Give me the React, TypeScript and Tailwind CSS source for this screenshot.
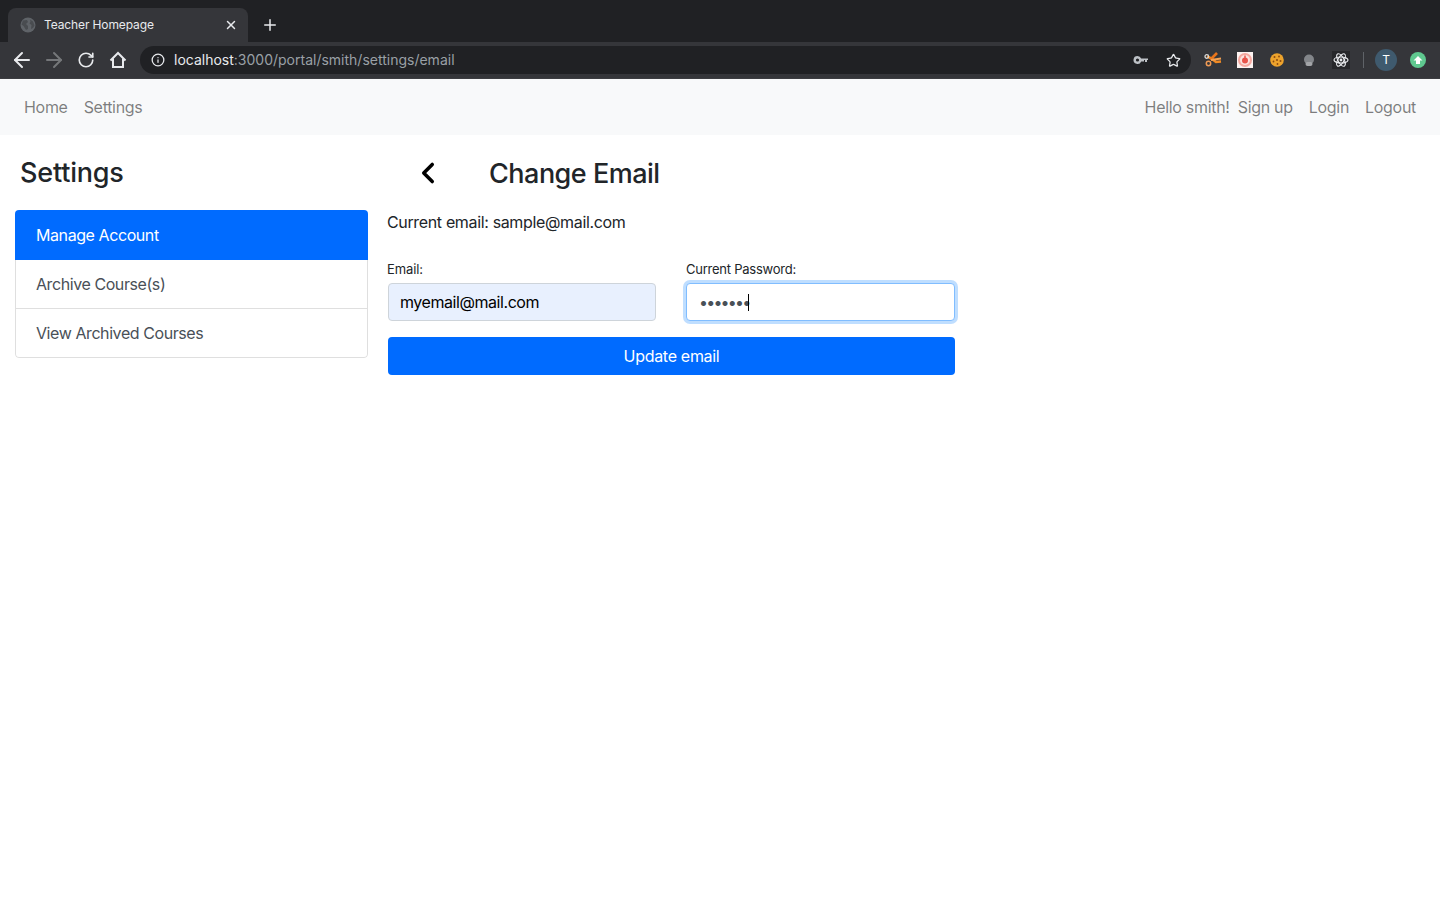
import { ArrowLeft, ArrowRight, ChevronLeft, Info, Plus, RotateCw, Star, X } from 'lucide-react'

function TabGlobe() {
  return (
    <svg width="16" height="16" viewBox="0 0 16 16">
      <circle cx="8" cy="8" r="7.5" fill="#5f6368" />
      <path d="M3 3.5 7 3l1 2-2 2 2 2v3L6 13 3.5 9 1.5 7.5ZM10 2.5l3 2 1.5 4-1.5 2.5-2 1 .5-4-2-1.5 1-2Z" fill="#494c50" />
    </svg>
  )
}

function HomeIcon() {
  return (
    <svg width="18" height="18" viewBox="0 0 18 18" fill="none" stroke="#e8eaed" strokeWidth="2" strokeLinejoin="miter">
      <path d="M1.5 9.5 9 2l7.5 7.5" />
      <path d="M4 7.5V16h10V7.5" />
    </svg>
  )
}

function KeyIcon() {
  return (
    <svg width="16" height="16" viewBox="0 0 16 16" fill="#bdc1c6">
      <path fillRule="evenodd" d="M4.5 4a4 4 0 0 1 3.7 2.5H15V8h-1v2h-2V8h-1v1.5H8.2A4 4 0 1 1 4.5 4Zm0 2.4a1.6 1.6 0 1 0 0 3.2 1.6 1.6 0 0 0 0-3.2Z" />
    </svg>
  )
}

function ScissorsExt() {
  return (
    <svg width="18" height="16" viewBox="0 0 18 16" fill="none">
      <path d="M3 4.5c3 .8 6 3 9 5.5l5-.5" stroke="#f08a24" strokeWidth="2.4" />
      <path d="M13 1 6.5 7.5" stroke="#e8741a" strokeWidth="2.6" />
      <path d="M7 8 17 6.5" stroke="#f5a354" strokeWidth="2" />
      <circle cx="2.8" cy="4.5" r="1.8" stroke="#d8d8d8" strokeWidth="1.3" />
      <circle cx="4.5" cy="11.5" r="2.2" stroke="#ef9a55" strokeWidth="1.5" />
    </svg>
  )
}

function TargetExt() {
  return (
    <svg width="16" height="16" viewBox="0 0 16 16">
      <rect width="16" height="16" fill="#fdf3f1" />
      <circle cx="8" cy="8" r="7" fill="#f6a89f" />
      <circle cx="8" cy="8" r="5" fill="#fbe3df" />
      <circle cx="8" cy="8.5" r="3" fill="#e9544a" />
      <path d="M8 3.5v4" stroke="#e9544a" strokeWidth="1.5" />
    </svg>
  )
}

function CookieExt() {
  return (
    <svg width="14" height="14" viewBox="0 0 14 14">
      <circle cx="7" cy="7" r="6.8" fill="#eda32c" />
      <circle cx="4.5" cy="4" r="1" fill="#8a4a12" />
      <circle cx="9" cy="3.5" r="0.9" fill="#8a4a12" />
      <circle cx="7" cy="7" r="1" fill="#8a4a12" />
      <circle cx="3.5" cy="8.5" r="0.9" fill="#8a4a12" />
      <circle cx="10.5" cy="8" r="1" fill="#8a4a12" />
      <circle cx="7.5" cy="11" r="0.9" fill="#8a4a12" />
    </svg>
  )
}

function BlobExt() {
  return (
    <svg width="12" height="14" viewBox="0 0 12 14">
      <circle cx="6" cy="6.5" r="5" fill="#83868a" />
      <rect x="2.5" y="9" width="7" height="4" rx="2" fill="#a3a5a8" />
    </svg>
  )
}

function ReactExt() {
  return (
    <svg width="18" height="18" viewBox="-9 -9 18 18" fill="none" stroke="#e8eaed" strokeWidth="1.2">
      <rect x="-9" y="-9" width="18" height="18" fill="#26272a" stroke="none" />
      <ellipse rx="7" ry="3" />
      <ellipse rx="7" ry="3" transform="rotate(60)" />
      <ellipse rx="7" ry="3" transform="rotate(120)" />
      <circle r="1.4" fill="#e8eaed" stroke="none" />
    </svg>
  )
}

function BrowserChrome() {
  return (
    <div className="bg-[#35363a] font-['Inter',sans-serif]">
      <div className="h-[42px] bg-[#202124] flex items-end pl-2">
        <div className="w-[240px] h-[34px] bg-[#35363a] rounded-t-lg flex items-center pl-3 pr-[10px]">
          <TabGlobe />
          <span className="ml-2 text-xs tracking-[-0.12px] text-[#e8eaed]">Teacher Homepage</span>
          <X size={14} strokeWidth={2.5} className="ml-auto text-[#e8eaed]" />
        </div>
        <Plus size={18} strokeWidth={2} className="ml-[13px] mb-2 text-[#e8eaed]" />
      </div>
      <div className="h-[37px] flex items-start pt-1 pl-[10px] pr-[14px] border-b border-[#3c3d41]">
        <div className="flex items-center h-7 gap-2">
          <ArrowLeft size={24} strokeWidth={2} className="text-[#e8eaed]" />
          <ArrowRight size={24} strokeWidth={2} className="text-[#75777a]" />
          <div className="w-6 flex justify-center">
            <RotateCw size={18} strokeWidth={2.2} className="text-[#e8eaed]" />
          </div>
          <div className="w-6 flex justify-center">
            <HomeIcon />
          </div>
        </div>
        <div className="ml-[10px] w-[1051px] h-7 bg-[#202124] rounded-full flex items-center pl-[11px] pr-[10px]">
          <Info size={14} strokeWidth={2.2} className="text-[#e8eaed]" />
          <span className="ml-[9px] text-sm text-[#e8eaed]">
            localhost<span className="text-[#9aa0a6]">:3000/portal/smith/settings/email</span>
          </span>
          <div className="ml-auto flex items-center gap-[17px]">
            <KeyIcon />
            <Star size={15} strokeWidth={2} className="text-[#e8eaed]" />
          </div>
        </div>
        <div className="flex items-center h-7 ml-[13px]">
          <div className="w-[18px] flex justify-center"><ScissorsExt /></div>
          <div className="ml-[14px] w-[18px] flex justify-center"><TargetExt /></div>
          <div className="ml-[14px] w-[18px] flex justify-center"><CookieExt /></div>
          <div className="ml-[14px] w-[18px] flex justify-center"><BlobExt /></div>
          <div className="ml-[14px] w-[18px] flex justify-center"><ReactExt /></div>
          <div className="ml-[13px] w-px h-4 bg-[#5f6368]" />
          <div className="ml-[11px] size-[22px] rounded-full bg-[#3f5a6e] text-white text-xs flex items-center justify-center">T</div>
          <div className="ml-[13px] size-4 rounded-full bg-[#5fc88f] flex items-center justify-center">
            <svg width="10" height="10" viewBox="0 0 10 10" fill="#fff"><path d="M5 1 9.5 5.5H7V9H3V5.5H.5Z" /></svg>
          </div>
        </div>
      </div>
    </div>
  )
}

export default function App() {
  return (
    <div className="min-h-[900px] bg-white font-['Inter',sans-serif] text-[#212529]">
      <BrowserChrome />
      <nav className="h-14 bg-[#f8f9fa] flex items-center px-4 text-base tracking-[-0.3px] text-[#00000080]">
        <a className="px-2">Home</a>
        <a className="px-2">Settings</a>
        <span className="ml-auto">Hello smith!</span>
        <a className="px-2">Sign up</a>
        <a className="px-2">Login</a>
        <a className="px-2">Logout</a>
      </nav>
      <div className="flex items-start pl-[15px]">
        <aside className="w-[353px]">
          <h3 className="pl-[5px] pt-[21px] h-[75px] text-[27px] tracking-[-0.2px] leading-[34px] font-medium">Settings</h3>
          <ul className="rounded overflow-hidden text-base tracking-[-0.42px]">
            <li className="h-[50px] bg-[#006bff] text-white flex items-center pl-[21px]">Manage Account</li>
            <li className="h-[49px] border-x border-b border-[#00000020] text-[#495057] flex items-center pl-5">Archive Course(s)</li>
            <li className="h-[49px] border-x border-b border-[#00000020] rounded-b text-[#495057] flex items-center pl-5">View Archived Courses</li>
          </ul>
        </aside>
        <main className="w-[567px] ml-5">
          <div className="flex items-center h-[75px] pt-[2px]">
            <ChevronLeft size={34} strokeWidth={2.5} className="ml-[23px] mb-[2px] text-black" />
            <h3 className="ml-[44px] text-[27px] tracking-[-0.5px] leading-[34px] font-medium">Change Email</h3>
          </div>
          <p className="text-base tracking-[-0.35px] leading-6 -ml-px text-[#212529]">Current email: sample@mail.com</p>
          <form className="mt-[25px]">
            <div className="grid grid-cols-[268px_269px] gap-[30px]">
              <label className="block">
                <span className="block text-[13px] tracking-[-0.1px] leading-[20px] mb-1 -ml-px">Email:</span>
                <input
                  readOnly
                  value="myemail@mail.com"
                  className="w-full h-[38px] pl-[11px] pr-3 bg-[#e8f0fe] border border-[#ced4da] rounded text-base tracking-[-0.44px] text-black outline-none"
                />
              </label>
              <label className="block">
                <span className="block text-[13px] tracking-[-0.24px] leading-[20px] mb-1">Current Password:</span>
                <div className="relative">
                  <input
                    readOnly
                    type="password"
                    value="1234567"
                    className="w-full h-[38px] px-3 bg-white border border-[#80bdff] rounded text-base tracking-[-1.8px] text-[#495057] outline-none shadow-[0_0_0_3px_#007bff40]"
                  />
                  <span className="absolute left-[62px] top-[11px] w-px h-[17px] bg-black" />
                </div>
              </label>
            </div>
            <button type="button" className="mt-4 w-full h-[38px] bg-[#006bff] text-white text-base tracking-[-0.3px] rounded">
              Update email
            </button>
          </form>
        </main>
      </div>
    </div>
  )
}
